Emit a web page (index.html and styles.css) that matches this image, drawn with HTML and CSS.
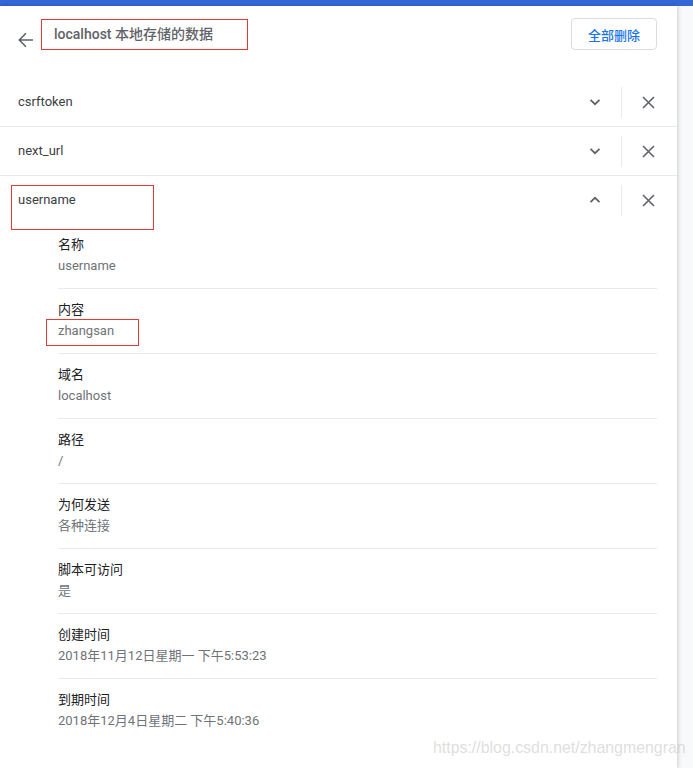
FILE: index.html
```html
<!DOCTYPE html>
<html lang="zh-CN">
<head>
<meta charset="utf-8">
<title>localhost 本地存储的数据</title>
<link rel="stylesheet" href="styles.css">
</head>
<body>
<div class="topbar"></div>
<div class="layout">
  <main class="panel">
    <header class="header">
      <svg class="back" width="16" height="16" viewBox="0 0 16 16"><path d="M1.5 8H15M8 1.3L1.3 8 8 14.7" fill="none" stroke="#5f6368" stroke-width="1.6"/></svg>
      <div class="title">localhost 本地存储的数据</div>
      <div class="spacer"></div>
      <button class="remove-all">全部删除</button>
    </header>

    <div class="row">
      <span class="name">csrftoken</span>
      <span class="icon-btn"><svg width="12" height="8" viewBox="0 0 12 8"><path d="M1.5 1.8L6 6.2 10.5 1.8" fill="none" stroke="#5f6368" stroke-width="1.7"/></svg></span>
      <span class="sep"></span>
      <span class="icon-btn"><svg width="13" height="13" viewBox="0 0 13 13"><path d="M1 1L12 12M12 1L1 12" stroke="#5f6368" stroke-width="1.6"/></svg></span>
    </div>
    <div class="row">
      <span class="name">next_url</span>
      <span class="icon-btn"><svg width="12" height="8" viewBox="0 0 12 8"><path d="M1.5 1.8L6 6.2 10.5 1.8" fill="none" stroke="#5f6368" stroke-width="1.7"/></svg></span>
      <span class="sep"></span>
      <span class="icon-btn"><svg width="13" height="13" viewBox="0 0 13 13"><path d="M1 1L12 12M12 1L1 12" stroke="#5f6368" stroke-width="1.6"/></svg></span>
    </div>
    <div class="row open">
      <span class="name">username</span>
      <span class="mark mark-row"></span>
      <span class="icon-btn"><svg width="12" height="8" viewBox="0 0 12 8"><path d="M1.5 6.2L6 1.8 10.5 6.2" fill="none" stroke="#5f6368" stroke-width="1.7"/></svg></span>
      <span class="sep"></span>
      <span class="icon-btn"><svg width="13" height="13" viewBox="0 0 13 13"><path d="M1 1L12 12M12 1L1 12" stroke="#5f6368" stroke-width="1.6"/></svg></span>
    </div>

    <div class="details">
      <div class="item"><div class="label">名称</div><div class="value">username</div></div>
      <div class="item"><div class="label">内容</div><div class="value">zhangsan<span class="mark mark-value"></span></div></div>
      <div class="item"><div class="label">域名</div><div class="value">localhost</div></div>
      <div class="item"><div class="label">路径</div><div class="value">/</div></div>
      <div class="item"><div class="label">为何发送</div><div class="value">各种连接</div></div>
      <div class="item"><div class="label">脚本可访问</div><div class="value">是</div></div>
      <div class="item"><div class="label">创建时间</div><div class="value">2018年11月12日星期一 下午5:53:23</div></div>
      <div class="item"><div class="label">到期时间</div><div class="value">2018年12月4日星期二 下午5:40:36</div></div>
    </div>
  </main>
  <div class="side"></div>
  <div class="watermark">https://blog.csdn.net/zhangmengran</div>
</div>
</body>
</html>
```

FILE: styles.css
```css
html, body {
  margin: 0;
  padding: 0;
  background: #f8f9fa;
}

body {
  font-family: Roboto, "Noto Sans CJK SC", sans-serif;
  color: #202124;
  font-size: 13px;
}

.topbar {
  height: 6px;
  background: #3367d6;
}

.layout {
  display: flex;
  min-height: 762px;
  position: relative;
}

.panel {
  width: 677px;
  flex: none;
  background: #fff;
  box-shadow: 1px 0 4px rgba(0, 0, 0, 0.18);
  position: relative;
  z-index: 1;
}

.side {
  flex: 1;
  background: #f8f9fa;
}

.header {
  display: flex;
  align-items: flex-start;
  height: 72px;
  box-sizing: border-box;
  padding: 12px 20px 0 18px;
}

.back {
  margin-top: 14px;
  flex: none;
}

.title {
  margin-left: 7px;
  margin-top: 1px;
  width: 207px;
  height: 31px;
  box-sizing: border-box;
  border: 1px solid #e53935;
  padding-left: 12px;
  font-size: 14px;
  line-height: 29px;
  font-weight: 500;
  color: #5f6368;
  white-space: nowrap;
}

.spacer {
  flex: 1;
}

.remove-all {
  width: 86px;
  height: 32px;
  box-sizing: border-box;
  border: 1px solid #dadce0;
  border-radius: 4px;
  background: #fff;
  color: #1a73e8;
  font-family: Roboto, "Noto Sans CJK SC", sans-serif;
  font-size: 13px;
  font-weight: 500;
  padding: 0;
}

.row {
  position: relative;
  display: flex;
  align-items: center;
  height: 48px;
  padding: 0 17px 0 18px;
  border-bottom: 1px solid #e8eaed;
}

.row.open {
  border-bottom: none;
}

.name {
  flex: 1;
  font-size: 13px;
  color: #3c4043;
  margin-bottom: 2px;
}

.icon-btn {
  width: 24px;
  height: 24px;
  display: flex;
  align-items: center;
  justify-content: center;
}

.sep {
  width: 1px;
  height: 31px;
  background: #e8eaed;
  margin: 0 14px;
}

.mark {
  position: absolute;
  border: 1px solid #e53935;
  box-sizing: border-box;
  pointer-events: none;
}

.mark-row {
  left: 11px;
  top: 9px;
  width: 143px;
  height: 45px;
}

.details {
  margin: 0 20px 0 58px;
}

.item {
  padding: 11px 0;
  border-bottom: 1px solid #e8eaed;
}

.item:last-child {
  border-bottom: none;
}

.label {
  line-height: 20px;
  font-size: 13px;
  color: #202124;
}

.value {
  position: relative;
  line-height: 22px;
  font-size: 13px;
  color: #6f7378;
}

.mark-value {
  left: -12px;
  top: -1px;
  width: 93px;
  height: 27px;
}

.watermark {
  position: absolute;
  left: 433px;
  top: 733px;
  z-index: 2;
  font-family: "Liberation Sans", Arial, sans-serif;
  font-size: 15.9px;
  line-height: 18px;
  color: rgba(200, 200, 200, 0.6);
  white-space: nowrap;
  pointer-events: none;
}
```
